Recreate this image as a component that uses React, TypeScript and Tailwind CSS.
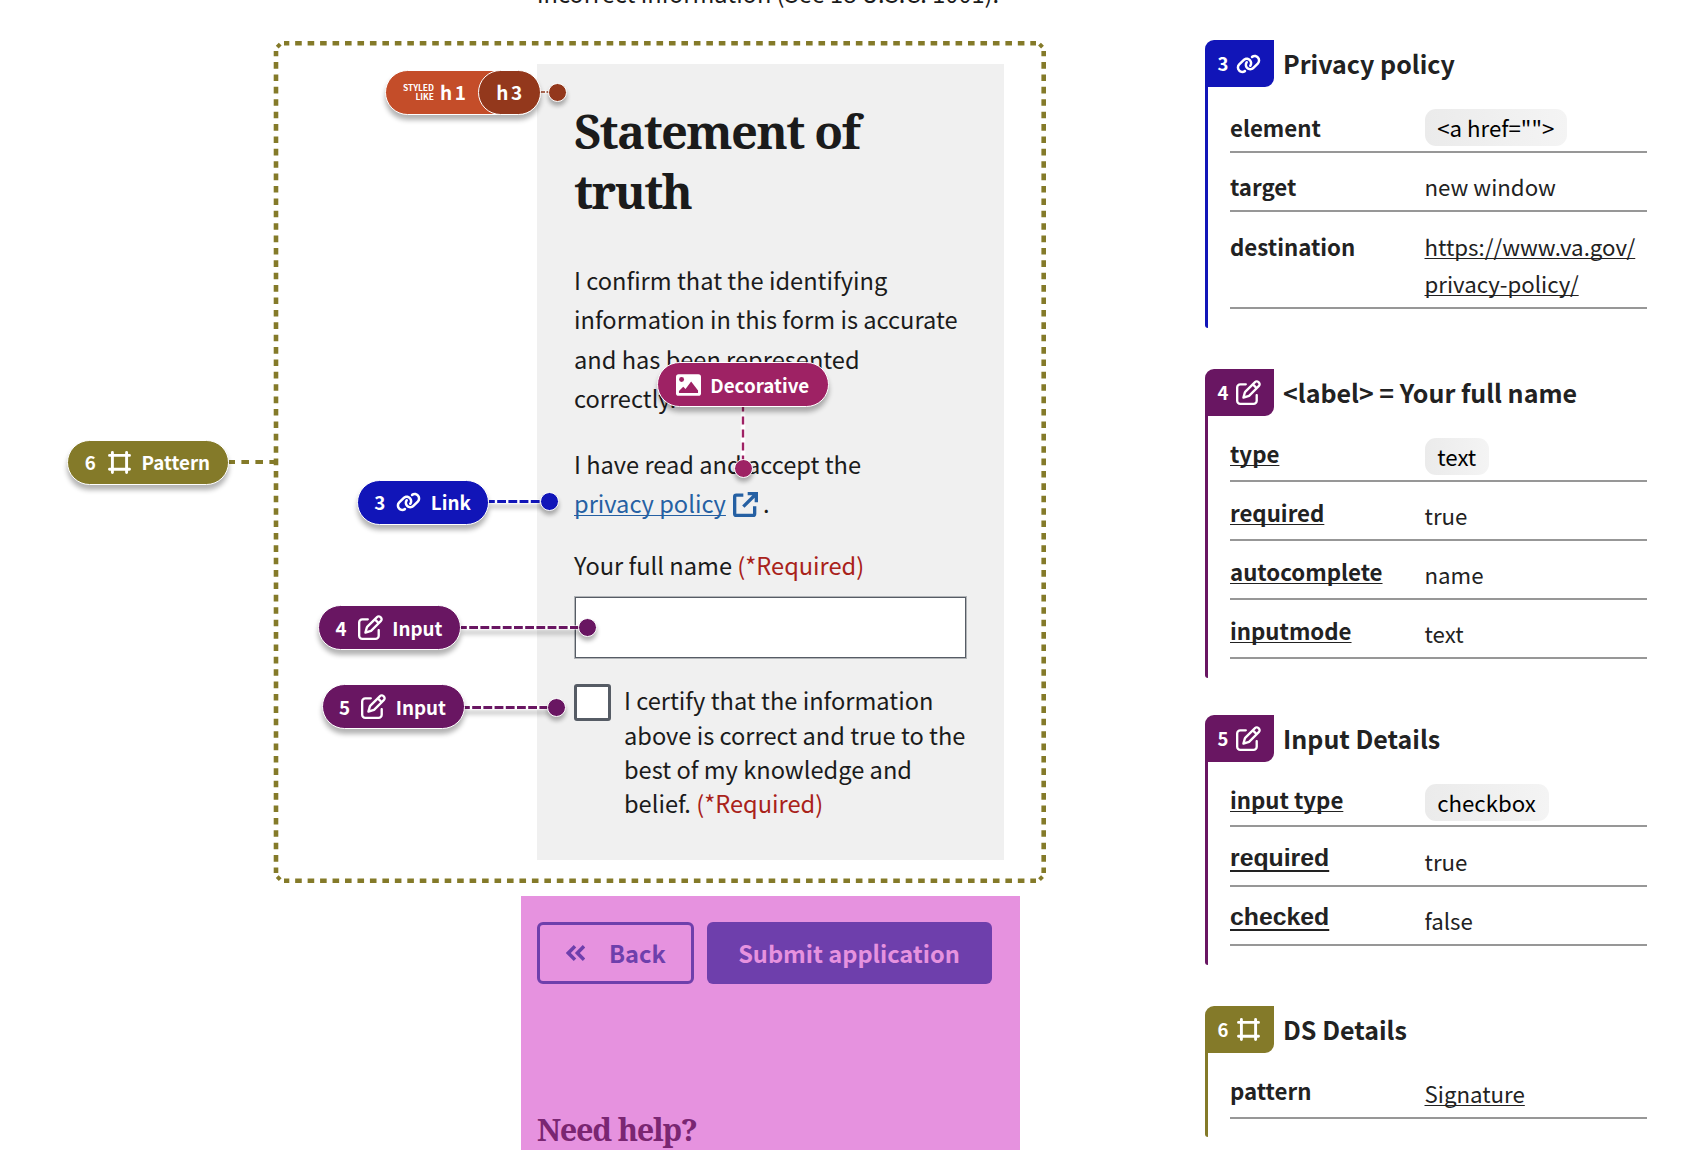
import type { ReactNode } from 'react';
import { FaLink, FaRegPenToSquare } from 'react-icons/fa6';

const SANS = `font-['Noto_Sans_CJK_SC','Noto_Sans',sans-serif]`;
const SERIF = `font-['Noto_Serif','DejaVu_Serif',serif]`;

/* ---------- icons ---------- */

function FrameIcon() {
  return (
    <svg width="23" height="23" viewBox="0 0 23 23" fill="none" stroke="currentColor" strokeWidth="2.9" strokeLinecap="round">
      <path d="M4.4 1.5v20M18.6 1.5v20M1.5 4.4h20M1.5 18.2h20" />
    </svg>
  );
}

function PictureIcon() {
  return (
    <svg width="25" height="22" viewBox="0 0 76 66">
      <rect width="76" height="66" rx="8" fill="#fff" />
      <circle cx="17" cy="16" r="7.5" fill="#9e2264" />
      <path d="M9 57V51L22 38L29 45L46 22L67 50V57Z" fill="#9e2264" />
    </svg>
  );
}

function LaunchIcon() {
  return (
    <svg width="25" height="25" viewBox="0 0 75 75" fill="none" stroke="currentColor" strokeWidth="10">
      <path d="M31 9.500H10Q5 9.500 5 14.500V65Q5 70 10 70H60Q65 70 65 65V43" strokeLinecap="butt" />
      <path d="M44 5H70V31M69 6L31 44" />
    </svg>
  );
}

function BackChevrons() {
  return (
    <svg width="19" height="16" viewBox="0 0 57 48" fill="none" stroke="currentColor" strokeWidth="10.5">
      <path d="M27 4L7 24L27 44M54 4L34 24L54 44" />
    </svg>
  );
}

function LinkIcon() {
  return <FaLink className="h-[20px] w-[25px]" />;
}

function EditIcon() {
  return <FaRegPenToSquare className="size-[25px]" />;
}

/* ---------- canvas annotations ---------- */

function Pill({ place, num, icon, label }: { place: string; num?: string; icon: ReactNode; label: string }) {
  return (
    <div
      className={`absolute flex h-[45px] items-center justify-center rounded-full border border-white text-[18.8px] leading-[44px] font-bold text-white shadow-[0_5px_5px_rgba(0,0,0,0.3)] ${place}`}
    >
      {num && <span className="mr-[11px]">{num}</span>}
      <span className="mr-[9.5px] flex w-[25px] justify-center">{icon}</span>
      <span className="mr-[1px]">{label}</span>
    </div>
  );
}

function Dot({ place }: { place: string }) {
  return <div className={`absolute size-[19px] rounded-full border border-white shadow-[0_4px_4px_rgba(0,0,0,0.3)] ${place}`} />;
}

function Connector({ place, width, color }: { place: string; width: number; color: string }) {
  return (
    <svg className={`absolute drop-shadow-[0_5px_2px_rgba(0,0,0,0.22)] ${place}`} width={width} height="5" viewBox={`0 0 ${width} 5`}>
      <path d={`M0 2.500H${width}`} stroke="#fff" strokeWidth="4" />
      <path d={`M0 2.500H${width}`} stroke={color} strokeWidth="3" strokeDasharray="8.800 2.400" strokeDashoffset="3" />
    </svg>
  );
}

function PatternOutline() {
  return (
    <svg className="absolute top-[40px] left-[229px]" width="819" height="845" viewBox="229 40 819 845" fill="none" stroke="#847a29" strokeWidth="4.6">
      <path d="M284 43.200H1036M284 880.700H1036" strokeDasharray="6.600 5.860" strokeDashoffset="1.300" />
      <path d="M276 51V873M1043.700 51V873" strokeDasharray="6.600 5.790" strokeDashoffset="1.300" />
      <path
        d="M277.200 47.200l3-3M1042.500 47.200l-3-3M277.200 876.700l3 3M1042.500 876.700l-3 3"
        strokeWidth="4"
      />
      <path d="M229 462H276" strokeWidth="4.200" strokeDasharray="7.600 6.400" strokeDashoffset="1.600" />
    </svg>
  );
}

function HeadingPill() {
  return (
    <div className="absolute top-[69.5px] left-[385px] flex h-[45px] w-[156px] items-center rounded-full border border-white bg-[#c44d29] pl-[17px] text-white shadow-[0_5px_5px_rgba(0,0,0,0.3)]">
      <span className="w-[31px] text-right text-[8.4px] leading-[9.2px] font-bold whitespace-nowrap">
        STYLED
        <br />
        LIKE
      </span>
      <span className="ml-[6px] text-[19px] leading-[42px] font-bold tracking-[2.5px]">h1</span>
      <span className="absolute -top-px -right-px flex h-[45px] w-[63px] items-center justify-center rounded-full border border-white bg-[#93381c] pl-[2px] text-[19px] leading-[42px] font-bold tracking-[2.5px]">
        h3
      </span>
    </div>
  );
}

function Annotations() {
  return (
    <>
      <PatternOutline />
      <Pill place="left-[67px] top-[439.5px] w-[162px] bg-[#847a29]" num="6" icon={<FrameIcon />} label="Pattern" />

      <svg className="absolute top-[90px] left-[541px]" width="9" height="4" viewBox="0 0 9 4">
        <path d="M0 2H9" stroke="#fff" strokeWidth="3" />
        <path d="M0 2H9" stroke="#93381c" strokeWidth="1.5" strokeDasharray="4 1.500" />
      </svg>
      <HeadingPill />
      <Dot place="left-[548px] top-[82.5px] bg-[#93381c]" />

      <Connector place="left-[489px] top-[499px]" width={54} color="#1115b8" />
      <Pill place="left-[357px] top-[479.5px] w-[132px] bg-[#1115b8]" num="3" icon={<LinkIcon />} label="Link" />
      <Dot place="left-[540px] top-[492px] bg-[#1115b8]" />

      <Connector place="left-[461px] top-[625px]" width={120} color="#691662" />
      <Pill place="left-[318px] top-[605.3px] w-[143px] bg-[#691662]" num="4" icon={<EditIcon />} label="Input" />
      <Dot place="left-[578px] top-[618px] bg-[#691662]" />

      <Connector place="left-[464px] top-[705px]" width={85} color="#691662" />
      <Pill place="left-[321.5px] top-[684.3px] w-[143px] bg-[#691662]" num="5" icon={<EditIcon />} label="Input" />
      <Dot place="left-[547px] top-[697.5px] bg-[#691662]" />

      <svg className="absolute top-[406px] left-[740px]" width="6" height="56" viewBox="0 0 6 56">
        <path d="M3 0V56" stroke="#fff" strokeWidth="4.5" />
        <path d="M3 0V56" stroke="#9e2264" strokeWidth="2.4" strokeDasharray="8 5" strokeDashoffset="2.500" />
      </svg>
      <Pill place="left-[657px] top-[362px] w-[172px] bg-[#9e2264]" icon={<PictureIcon />} label="Decorative" />
      <Dot place="left-[733.5px] top-[458.5px] bg-[#9e2264]" />
    </>
  );
}

/* ---------- form preview ---------- */

function Required() {
  return <span className="text-[#a9221a]">(*Required)</span>;
}

function FormPreview() {
  return (
    <main className="w-[1205px] shrink-0 text-[#1b1b1b]">
      <p className="-mt-[26px] ml-[537px] text-[23.6px] leading-[39px] whitespace-nowrap">
        incorrect information (See 18 U.S.C. 1001).
      </p>

      <section className="mt-[51px] ml-[537px] h-[796px] w-[467px] bg-[#f0f0f0] px-[37px] pt-[36.5px] text-[23.63px]">
        <h1 className={`text-[47px] leading-[60.5px] font-bold tracking-[-1.6px] ${SERIF}`}>
          Statement of
          <br />
          truth
        </h1>
        <p className="mt-[39.5px] leading-[39.4px] whitespace-nowrap">
          I confirm that the identifying
          <br />
          information in this form is accurate
          <br />
          and has been represented
          <br />
          correctly.
        </p>
        <p className="mt-[26px] leading-[39.4px] whitespace-nowrap">
          I have read and accept the
          <br />
          <span className="flex items-center text-[#1b1b1b]">
            <a className="text-[#2560a3] underline decoration-1 underline-offset-[2px] [text-decoration-skip-ink:none]">privacy policy</a>
            <span className="mt-[2px] ml-[7px] text-[#2560a3]">
              <LaunchIcon />
            </span>
            <span className="ml-[5px]">.</span>
          </span>
        </p>
        <label className="mt-[23px] block leading-[39.4px] whitespace-nowrap">
          Your full name <Required />
        </label>
        <div className="mt-[11px] ml-px h-[61px] w-[391px] border border-[#565c65] bg-white ring-1 ring-[#565c65]/40" />
        <div className="mt-[25px] flex">
          <div className="mt-[1px] size-[37px] shrink-0 rounded-[3px] border-3 border-[#565c65] bg-white" />
          <p className="mt-[0.5px] ml-[13px] leading-[34.3px] whitespace-nowrap">
            I certify that the information
            <br />
            above is correct and true to the
            <br />
            best of my knowledge and
            <br />
            belief. <Required />
          </p>
        </div>
      </section>

      <section className="mt-[36px] ml-[521px] h-[300px] w-[498.5px] bg-[#e692df] px-[16px] pt-[26px]">
        <div className="flex gap-[12.5px] text-[23.6px] leading-[38px] font-bold">
          <div className="flex h-[62px] w-[157px] items-center rounded-[6px] border-3 border-[#6e3fac] pl-[26px] text-[#6e3fac]">
            <BackChevrons />
            <span className="-mt-px ml-[24px]">Back</span>
          </div>
          <div className="flex h-[62px] w-[285px] items-center justify-center rounded-[6px] bg-[#6e3fac] pb-[1px] text-[#e692df]">
            Submit application
          </div>
        </div>
        <h2 className={`mt-[125px] text-[30.5px] leading-[40px] font-bold tracking-[-1.2px] text-[#7a2672] ${SERIF}`}>Need help?</h2>
      </section>
    </main>
  );
}

/* ---------- detail cards ---------- */

const LINK = 'underline decoration-1 underline-offset-[2px] [text-decoration-skip-ink:none]';

function Card({ tone, num, icon, title, className, children }: { tone: string; num: string; icon: ReactNode; title: string; className: string; children: ReactNode }) {
  return (
    <section className={`relative w-[443px] ${className}`}>
      <div className={`absolute top-[20px] bottom-0 left-0 w-[3px] rounded-bl-[3px] ${tone}`} />
      <header className="flex h-[47px] items-center">
        <div className={`flex h-full w-[68.5px] items-center rounded-tl-[9px] rounded-br-[9px] pl-[12.5px] text-[18.5px] font-bold text-white ${tone}`}>
          <span className="w-[18.5px]">{num}</span>
          <span className="flex w-[25px] justify-center">{icon}</span>
        </div>
        <h3 className="ml-[9.5px] text-[25px] leading-[47px] font-bold whitespace-nowrap">{title}</h3>
      </header>
      <dl className="ml-[25px] w-[417px]">{children}</dl>
    </section>
  );
}

function Row({ name, value, size = 'h-[59px] items-end', keyClass = 'pb-[5px]', valueClass = 'pb-[5px]' }: { name: string; value: ReactNode; size?: string; keyClass?: string; valueClass?: string }) {
  return (
    <div className={`flex border-b-2 border-[#979797] text-[22.25px] leading-[37px] ${size}`}>
      <dt className={`w-[194.5px] shrink-0 font-bold ${keyClass}`}>{name}</dt>
      <dd className={`whitespace-nowrap ${valueClass}`}>{value}</dd>
    </div>
  );
}

function Chip({ children }: { children: ReactNode }) {
  return (
    <span className="block rounded-[11px] bg-linear-to-r from-[#ebebeb] to-[#f4f4f4] px-[12.7px] text-black">{children}</span>
  );
}

const LINK_KEY = `${LINK} pb-[8px]`;
const ARIAL_KEY =
  "pb-[9.5px] font-['Liberation_Sans',Arial,sans-serif] text-[24.8px] underline decoration-2 underline-offset-[4px] [text-decoration-skip-ink:none]";

function Details() {
  return (
    <aside className="flex flex-col pt-[40px] text-[#222]">
      <Card tone="bg-[#1115b8]" num="3" icon={<LinkIcon />} title="Privacy policy" className="h-[288px]">
        <Row name="element" value={<Chip>&lt;a href=&quot;&quot;&gt;</Chip>} size="h-[66px] items-end" />
        <Row name="target" value="new window" />
        <Row
          name="destination"
          size="h-[96.5px] items-start pt-[16px]"
          value={
            <a className={LINK}>
              https://www.va.gov/
              <br />
              privacy-policy/
            </a>
          }
        />
      </Card>

      <Card tone="bg-[#691662]" num="4" icon={<EditIcon />} title="<label> = Your full name" className="mt-[41px] h-[309px]">
        <Row name="type" value={<Chip>text</Chip>} size="h-[66px] items-end" keyClass={LINK_KEY} />
        <Row name="required" value="true" keyClass={LINK_KEY} />
        <Row name="autocomplete" value="name" keyClass={LINK_KEY} />
        <Row name="inputmode" value="text" keyClass={LINK_KEY} />
      </Card>

      <Card tone="bg-[#691662]" num="5" icon={<EditIcon />} title="Input Details" className="mt-[37px] h-[250px]">
        <Row name="input type" value={<Chip>checkbox</Chip>} size="h-[65px] items-end" keyClass={`${LINK} pb-[7px]`} valueClass="pb-[4px]" />
        <Row name="required" value="true" size="h-[60px] items-end" keyClass={ARIAL_KEY} />
        <Row name="checked" value="false" keyClass={ARIAL_KEY} />
      </Card>

      <Card tone="bg-[#847a29]" num="6" icon={<FrameIcon />} title="DS Details" className="mt-[41px] h-[131px]">
        <Row name="pattern" value={<a className={LINK}>Signature</a>} size="h-[66px] items-end" keyClass="pb-[8px]" />
      </Card>
    </aside>
  );
}

export default function App() {
  return (
    <div className={`relative flex h-[1150px] w-[1694px] overflow-hidden bg-white ${SANS}`}>
      <FormPreview />
      <Details />
      <Annotations />
    </div>
  );
}
